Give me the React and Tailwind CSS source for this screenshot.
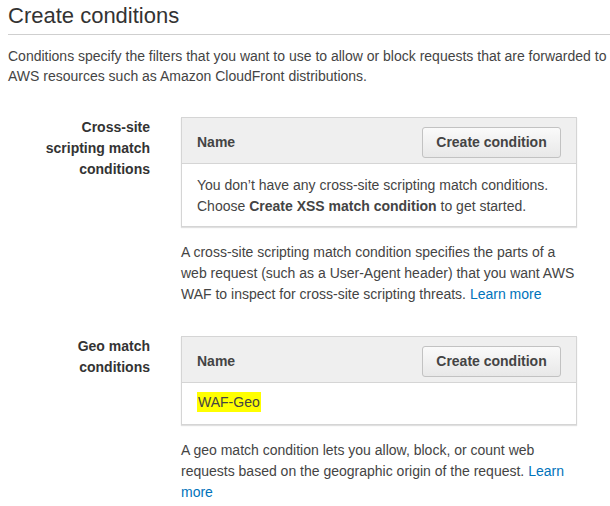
const ConditionSection = ({ label, children, description, bodyClass }) => {
  return (
    <div className="flex">
      <div className="w-[142px] text-right text-[14px] leading-[21px] font-bold text-[#333]">
        {label}
      </div>
      <div className="ml-[31px] w-[396px]">
        {/* Table box */}
        <div className="border border-[#d5d5d5] shadow-[0_1px_1px_rgba(0,0,0,0.12)]">
          <div className="flex items-center justify-between bg-[#efefef] border-b border-[#d5d5d5] pl-[15px] pr-[15px] pt-[9px] pb-[5px]">
            <span className="text-[14px] font-bold text-[#444]">Name</span>
            <button className="h-[31px] w-[139px] rounded-[3px] border border-[#c2c2c2] bg-linear-to-b from-[#fafafa] to-[#e8e8e8] text-[14px] font-bold text-[#444]">
              Create condition
            </button>
          </div>
          <div className={`bg-white px-[15px] text-[14px] leading-[21px] text-[#444] ${bodyClass}`}>
            {children}
          </div>
        </div>

        {/* Help text */}
        <p className="mt-[15px] text-[14px] leading-[21px] text-[#444]">
          {description}{' '}
          <a className="text-[#0073bb]" href="#">
            Learn more
          </a>
        </p>
      </div>
    </div>
  );
};

export default function App() {
  return (
    <div className="min-h-[506px] bg-white pl-[8px] font-['Liberation_Sans',Arial,sans-serif]">
      {/* Page header */}
      <h1 className="text-[22px] leading-[32px] text-[#333] pb-[2px] border-b border-[#cfcfcf]">
        Create conditions
      </h1>
      <p className="mt-[11px] w-[602px] text-[14px] leading-[20px] text-[#444]">
        Conditions specify the filters that you want to use to allow or block requests that are forwarded to
        AWS resources such as Amazon CloudFront distributions.
      </p>

      <div className="mt-[31px]">
        <ConditionSection
          label={
            <>
              Cross-site
              <br />
              scripting match
              <br />
              conditions
            </>
          }
          bodyClass="pt-[11px] pb-[9px]"
          description="A cross-site scripting match condition specifies the parts of a web request (such as a User-Agent header) that you want AWS WAF to inspect for cross-site scripting threats."
        >
          You don’t have any cross-site scripting match conditions.
          <br />
          Choose <span className="font-bold">Create XSS match condition</span> to get started.
        </ConditionSection>
      </div>

      <div className="mt-[31px]">
        <ConditionSection
          label={
            <>
              Geo match
              <br />
              conditions
            </>
          }
          bodyClass="pt-[9px] pb-[11px]"
          description="A geo match condition lets you allow, block, or count web requests based on the geographic origin of the request."
        >
          <span className="bg-[#ffff00] px-[1px] py-[2px]">WAF-Geo</span>
        </ConditionSection>
      </div>
    </div>
  );
}
